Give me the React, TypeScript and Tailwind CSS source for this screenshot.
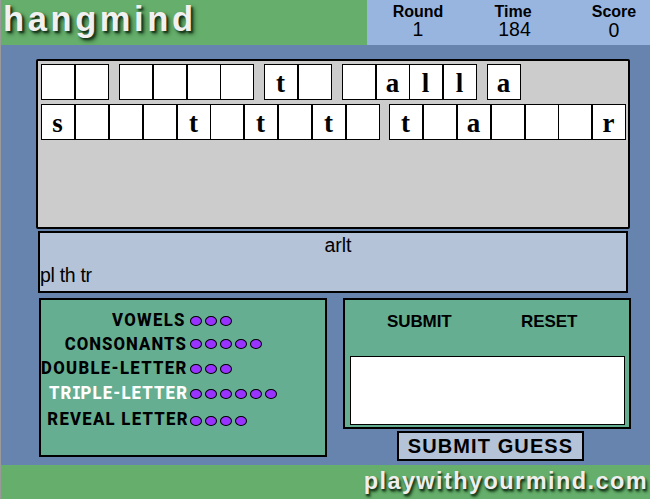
import React from 'react';

// "_" is a hidden letter; "<" means the tile shares its left border with the previous one
const rows: string[][][] = [
  [['_', '_'], ['_', '_', '_', '<_'], ['t', '_'], ['_', 'a', '<l', 'l'], ['a']],
  [
    ['s', '_', '_', '_', 't', '<_', 't', '_', 't', '_'],
    ['t', '_', 'a', '_', '_', '<_', 'r'],
  ],
];

function Tile({ code }: { code: string }) {
  const letter = code.replace('<', '').replace('_', '');
  const shared = code.startsWith('<');
  return (
    <div
      className={`flex h-9 w-[34px] shrink-0 justify-center border border-black bg-white font-['Liberation_Serif',serif] text-[27px] leading-[37px] font-bold ${shared ? '-ml-px' : ''}`}
    >
      <span className="-ml-px">{letter}</span>
    </div>
  );
}

function Stat({ label, value, className, valueClass = 'leading-[18px]' }: {
  label: string; value: string; className: string; valueClass?: string;
}) {
  return (
    <div className={`flex flex-col items-center ${className}`}>
      <span className="text-[16px] leading-[18px] font-bold">{label}</span>
      <span className={`text-[19.5px] ${valueClass}`}>{value}</span>
    </div>
  );
}

function Hint({ label, count, className, spacing, active }: {
  label: React.ReactNode; count: number; className: string; spacing: string; active?: boolean;
}) {
  return (
    <div className={`flex items-center ${className}`}>
      <div className={`flex h-5 w-[148px] shrink-0 justify-end whitespace-pre text-[19px] leading-5 font-extrabold font-[Roboto,sans-serif] ${active ? 'text-white' : 'text-black'}`}>
        <span className={`origin-right scale-x-[0.88] ${spacing}`}>{label}</span>
      </div>
      <div className="ml-px flex gap-[3px]">
        {Array.from({ length: count }, (_, i) => (
          <span key={i} className="h-[10px] w-3 rounded-[50%] border border-black bg-[#9933ff]" />
        ))}
      </div>
    </div>
  );
}

export default function App() {
  return (
    <div className="flex h-[499px] w-[650px] flex-col overflow-hidden border-l border-[#999] bg-[#6684ae] font-['Liberation_Sans',Arial,sans-serif] text-black">
      <header className="flex h-[45px] shrink-0 bg-[#66ae6b]">
        <h1 className="w-[366px] pl-[2px] text-[34.5px] leading-[38px] font-bold tracking-[3.6px] text-[#f0f0f0] [text-shadow:2px_2px_2px_#17351b,3px_3px_4px_#285a2d]">hangmind</h1>
        <div className="flex flex-1 bg-[#98b5e0] pt-[3px]">
          <Stat label="Round" value="1" className="ml-[16px] w-[70px]" valueClass="leading-[16px]" />
          <Stat label="Time" value="184" className="ml-[25px] w-[70px]" valueClass="pl-[3px] leading-[16px]" />
          <Stat label="Score" value="0" className="ml-[31px] w-[70px]" />
        </div>
      </header>

      <section className="mt-[14px] ml-[35px] flex h-[170px] w-[594px] shrink-0 flex-col gap-1 rounded-[2px] border-2 border-black bg-[#ccc] pt-[3px] pl-[3px]">
        {rows.map((words, r) => (
          <div key={r} className={r === 0 ? 'flex gap-[10px]' : 'flex gap-[9px]'}>
            {words.map((word, w) => (
              <div key={w} className="flex">
                {word.map((code, i) => <Tile key={i} code={code} />)}
              </div>
            ))}
          </div>
        ))}
      </section>

      <section className="mt-[2px] ml-[37px] flex h-[62px] w-[590px] shrink-0 flex-col border-2 border-black bg-[#b4c3d7] text-[19.5px] leading-[30px]">
        <p className="h-[30px] pl-[10px] text-center leading-[24px]">arlt</p>
        <p className="leading-[25px] tracking-[-0.3px]">pl th tr</p>
      </section>

      <main className="mt-[5px] ml-[38px] flex h-[167px] shrink-0 items-start">
        <section className="h-[159px] w-[288px] border-2 border-black bg-[#66ae91]">
          <Hint label="VOWELS" count={3} className="mt-[11px]" spacing="-mt-px mr-[3px] tracking-[1.5px]" />
          <Hint label="CONSONANTS" count={5} className="mt-[3px]" spacing="mr-[2px] tracking-[1.2px]" />
          <Hint label="DOUBLE-LETTER" count={3} className="mt-[5px]" spacing="-mt-px mr-px tracking-[1.5px]" />
          <Hint
            label={<>TR<span className="-mx-px font-['DejaVu_Sans_Mono',monospace] text-[17.5px] leading-none tracking-[0.5px]">I</span>PLE-LETTER</>}
            count={6}
            className="mt-[5px]"
            spacing="-mt-px mr-px tracking-[1.3px]"
            active
          />
          <Hint label="REVEAL LETTER" count={4} className="mt-[7px]" spacing="-mt-[2px] tracking-[1.45px]" />
        </section>

        <div className="ml-4 flex w-[288px] flex-col items-start">
          <section className="h-[131px] w-[288px] border-2 border-black bg-[#66ae91] px-[5px]">
            <div className="flex h-[56px] text-[17px] leading-[43px] font-bold">
              <button className="ml-[37px] h-[43px] w-[65px] text-left tracking-[-0.1px]">SUBMIT</button>
              <button className="ml-[69px] h-[43px] text-left tracking-[-0.1px]">RESET</button>
            </div>
            <div className="h-[69px] w-[275px] border border-black bg-white" />
          </section>
          <button className="mt-[2px] ml-[54px] h-[30px] w-[187px] border-2 border-black bg-[#b4c3d7] text-[20px] leading-[26px] font-bold tracking-[1.1px]">SUBMIT GUESS</button>
        </div>
      </main>

      <footer className="flex flex-1 justify-end bg-[#66ae6b]">
        <span className="mr-[2px] text-[23.5px] leading-[33px] font-bold tracking-[1.42px] text-[#eee] [text-shadow:1px_2px_2px_#17351b,2px_3px_3px_#285a2d]">playwithyourmind.com</span>
      </footer>
    </div>
  );
}
